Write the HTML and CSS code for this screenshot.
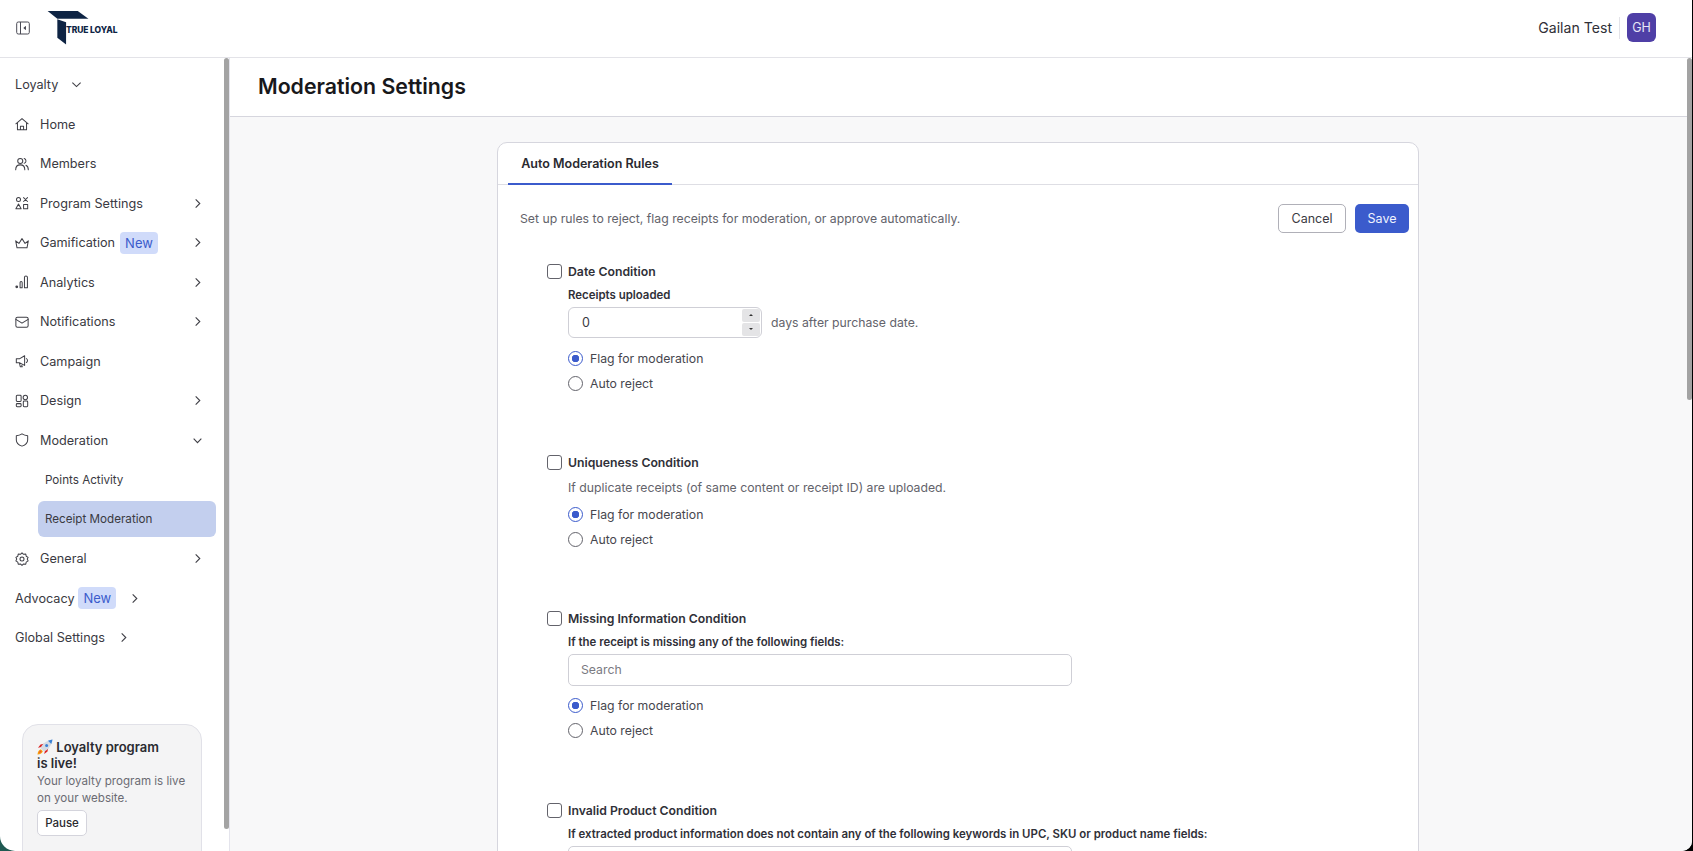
FILE: index.html
```html
<!DOCTYPE html>
<html lang="en">
<head>
<meta charset="utf-8">
<title>Moderation Settings</title>
<link rel="stylesheet" href="styles.css">
</head>
<body>
<div class="window">
  <header class="topbar">
    <div class="topbar-left">
      <svg class="toggle" viewBox="0 0 14 14" fill="none" stroke="#4b4b55" stroke-width="1"><rect x=".7" y="1" width="12.6" height="12" rx="1.6"/><path d="M4.5 1v12"/><path d="M9.5 5.5 7.8 7l1.7 1.500z" fill="#4b4b55"/></svg>
      <div class="logo">
        <svg class="logo-mark" viewBox="0 0 44 36"><path d="M0 0h31l11 8H10z" fill="#0e2444"/><path d="M10 8.500l9 3v23l-9-7z" fill="#0e2444"/></svg>
        <span class="logo-text">TRUE LOYAL</span>
      </div>
    </div>
    <div class="user">
      <span class="user-name">Gailan Test</span>
      <span class="user-sep"></span>
      <span class="avatar">GH</span>
    </div>
  </header>
  <div class="body">
    <aside class="sidebar">
      <nav class="nav">
        <div class="nav-row top-level"><span>Loyalty</span><svg class="chev chev-inline" viewBox="0 0 12 12"><path d="M1.500 4 6 8.300 10.500 4"/></svg></div>
        <div class="nav-row"><svg class="ico" viewBox="0 0 16 16"><path d="M1 7.800 8 1.800l7 6M2.800 6.500V14.500h10.400V6.500M6.200 14.500v-4h3.600v4"/></svg><span>Home</span></div>
        <div class="nav-row"><svg class="ico" viewBox="0 0 16 16"><circle cx="6" cy="4.500" r="2.900"/><path d="M.8 14.500c0-3.500 2-5.500 5.200-5.500s5.200 2 5.200 5.500M10.500 1.800a2.800 2.800 0 0 1 0 5.400M12.500 9.500c1.700.8 2.700 2.500 2.700 5"/></svg><span>Members</span></div>
        <div class="nav-row"><svg class="ico" viewBox="0 0 16 16"><circle cx="4" cy="4" r="2.300"/><path d="m9.800 1.800 4.500 4.500M14.300 1.800 9.800 6.300M4 9.200l3 5.300H1zM9.800 9.800h4.700v4.700H9.800z"/></svg><span>Program Settings</span><svg class="chev chev-end" viewBox="0 0 12 12"><path d="M4 1.500 8.500 6 4 10.500"/></svg></div>
        <div class="nav-row"><svg class="ico ico-wide" viewBox="0 0 16 16"><path d="M.8 5.500 4.500 8.500 8 3l3.500 5.500 3.700-3-1.500 8H2.300z"/></svg><span>Gamification</span><span class="badge">New</span><svg class="chev chev-end" viewBox="0 0 12 12"><path d="M4 1.500 8.500 6 4 10.500"/></svg></div>
        <div class="nav-row"><svg class="ico" viewBox="0 0 16 16"><circle cx="2" cy="13.500" r="1" fill="#3f3f46"/><path d="M5.800 14.500V8.500a1 1 0 0 1 2.400 0v6zM10.800 14.500V2.800a1.500 1.500 0 0 1 3.400 0v11.700z"/></svg><span>Analytics</span><svg class="chev chev-end" viewBox="0 0 12 12"><path d="M4 1.500 8.500 6 4 10.500"/></svg></div>
        <div class="nav-row"><svg class="ico" viewBox="0 0 16 16"><rect x="1" y="2.500" width="14" height="11.500" rx="1.800"/><path d="m1 5 7 4.300L15 5"/></svg><span>Notifications</span><svg class="chev chev-end" viewBox="0 0 12 12"><path d="M4 1.500 8.500 6 4 10.500"/></svg></div>
        <div class="nav-row"><svg class="ico" viewBox="0 0 16 16"><path d="M1.500 5.500h3.500L11 2v11L5 10H1.500zM5 10l1 4.500h2.300L7 10.800M13 5.300c1.700.8 1.700 3.600 0 4.400"/></svg><span>Campaign</span></div>
        <div class="nav-row"><svg class="ico" viewBox="0 0 16 16"><rect x="1.500" y="1.500" width="5.500" height="7" rx="1"/><circle cx="11.800" cy="4" r="2.500"/><rect x="1.500" y="11" width="5.500" height="3.500" rx="1"/><rect x="9.500" y="8" width="5" height="6.500" rx="1"/></svg><span>Design</span><svg class="chev chev-end" viewBox="0 0 12 12"><path d="M4 1.500 8.500 6 4 10.500"/></svg></div>
        <div class="nav-row"><svg class="ico" viewBox="0 0 16 16"><path d="M8 1c2 1.300 4.300 2 6.500 2.200V8c0 3.300-2.800 5.800-6.500 7-3.700-1.200-6.500-3.700-6.500-7V3.200C3.700 3 6 2.300 8 1z"/></svg><span>Moderation</span><svg class="chev chev-end" viewBox="0 0 12 12"><path d="M1.800 4 6 8.300 10.200 4"/></svg></div>
        <div class="nav-row sub"><span class="sub-item">Points Activity</span></div>
        <div class="nav-row sub"><span class="sub-item is-active">Receipt Moderation</span></div>
        <div class="nav-row"><svg class="ico" viewBox="0 0 16 16"><circle cx="8" cy="8" r="2.300"/><path d="m8 1 1.800 1.700 2.500-.3.500 2.400 2.200 1.300-1 2 1 2.100-2.200 1.300-.5 2.400-2.500-.3L8 15.300l-1.800-1.700-2.500.3-.5-2.400L1 10.200l1-2.100-1-2 2.200-1.300.5-2.400 2.500.3z"/></svg><span>General</span><svg class="chev chev-end" viewBox="0 0 12 12"><path d="M4 1.500 8.500 6 4 10.500"/></svg></div>
        <div class="nav-row top-level"><span>Advocacy</span><span class="badge">New</span><svg class="chev chev-inline wide" viewBox="0 0 12 12"><path d="M4 1.500 8.500 6 4 10.500"/></svg></div>
        <div class="nav-row top-level"><span>Global Settings</span><svg class="chev chev-inline" viewBox="0 0 12 12"><path d="M4 1.500 8.500 6 4 10.500"/></svg></div>
      </nav>
      <div class="promo">
        <div class="promo-title"><svg class="rocket" viewBox="0 0 16 16"><path d="M.5 15.500c.2-3 1.500-4.700 3.300-5.300l2 2c-.6 1.800-2.300 3.100-5.300 3.300z" fill="#f59e0b"/><path d="M2 14c.2-1.200.8-2 1.800-2.400l.6.600C4 13.200 3.200 13.800 2 14z" fill="#ef4444"/><path d="M4.500 8 1 8.800l2.500-3.300 3.500-.7zM8 11.500l-.8 3.500 3.300-2.500.7-3.500z" fill="#dc2626"/><path d="M3.500 9C5.500 4.500 9.500 1.500 15.500.5 14.500 6.500 11.500 10.500 7 12.500z" fill="#d5dae3"/><path d="M11 1.700C12.800 1.100 14.200.7 15.500.5c-.2 1.300-.6 2.800-1.200 4.500z" fill="#3b82d6"/><circle cx="9.600" cy="6.400" r="1.500" fill="#3b82d6"/></svg> Loyalty program<br>is live!</div>
        <p class="promo-text">Your loyalty program is live on your website.</p>
        <button class="btn-pause" type="button">Pause</button>
      </div>
      <span class="scroll scroll-side"></span>
    </aside>
    <main class="main">
      <div class="page-head"><h1>Moderation Settings</h1></div>
      <div class="page-body">
        <section class="card">
          <div class="tabs"><div class="tab">Auto Moderation Rules</div></div>
          <div class="card-body">
            <div class="intro">
              <p class="muted intro-text">Set up rules to reject, flag receipts for moderation, or approve automatically.</p>
              <div class="actions">
                <button class="btn btn-ghost" type="button">Cancel</button>
                <button class="btn btn-primary" type="button">Save</button>
              </div>
            </div>

            <div class="rule rule-date">
              <label class="rule-head"><input type="checkbox"><span>Date Condition</span></label>
              <div class="rule-content">
                <div class="field-label">Receipts uploaded</div>
                <div class="days">
                  <div class="number"><span>0</span>
                    <div class="spin"><span class="spin-b"><i class="up"></i></span><span class="spin-b"><i class="down"></i></span></div>
                  </div>
                  <span class="muted">days after purchase date.</span>
                </div>
                <div class="radios">
                  <label class="radio"><input type="radio" name="a" checked><span>Flag for moderation</span></label>
                  <label class="radio"><input type="radio" name="a"><span>Auto reject</span></label>
                </div>
              </div>
            </div>

            <div class="rule rule-unique">
              <label class="rule-head"><input type="checkbox"><span>Uniqueness Condition</span></label>
              <div class="rule-content">
                <p class="muted desc">If duplicate receipts (of same content or receipt ID) are uploaded.</p>
                <div class="radios">
                  <label class="radio"><input type="radio" name="b" checked><span>Flag for moderation</span></label>
                  <label class="radio"><input type="radio" name="b"><span>Auto reject</span></label>
                </div>
              </div>
            </div>

            <div class="rule rule-missing">
              <label class="rule-head"><input type="checkbox"><span>Missing Information Condition</span></label>
              <div class="rule-content">
                <div class="field-label">If the receipt is missing any of the following fields:</div>
                <input class="search" type="text" placeholder="Search">
                <div class="radios">
                  <label class="radio"><input type="radio" name="c" checked><span>Flag for moderation</span></label>
                  <label class="radio"><input type="radio" name="c"><span>Auto reject</span></label>
                </div>
              </div>
            </div>

            <div class="rule">
              <label class="rule-head"><input type="checkbox"><span>Invalid Product Condition</span></label>
              <div class="rule-content">
                <div class="field-label">If extracted product information does not contain any of the following keywords in UPC, SKU or product name fields:</div>
                <input class="search" type="text">
              </div>
            </div>
          </div>
        </section>
      </div>
      <span class="scroll scroll-main"></span>
    </main>
  </div>
</div>
</body>
</html>
```
FILE: styles.css
```css
* { box-sizing: border-box; }
html, body { height: 100%; margin: 0; overflow: hidden; }
body {
  background: linear-gradient(90deg, #1f5a52 0, #0c1f1d 30%, #000 100%);
  font-family: Inter, "Liberation Sans", sans-serif;
  color: #3a3a42;
}
.window {
  width: 1692px;
  height: 851px;
  background: #fff;
  border-radius: 0 0 10px 15px;
  overflow: hidden;
  display: flex;
  flex-direction: column;
}
.topbar {
  height: 58px;
  flex: none;
  display: flex;
  justify-content: space-between;
  align-items: center;
  border-bottom: 1px solid #e3e3e8;
  padding: 0 36px 2px 16px;
}
.topbar-left { display: flex; align-items: center; gap: 17px; }
.toggle { width: 14px; height: 14px; display: block; }
.logo { position: relative; width: 71px; height: 35px; margin-top: 2px; }
.logo-mark { position: absolute; left: 0; top: 0; width: 44px; height: 35px; }
.logo-text {
  position: absolute;
  left: 19px;
  top: 14px;
  font-size: 8.500px;
  line-height: 10px;
  font-weight: 800;
  color: #0e2444;
  white-space: nowrap;
  letter-spacing: -.1px;
}
.user { display: flex; align-items: center; }
.user-name { font-size: 14.100px; color: #303038; }
.user-sep { width: 1px; height: 22px; background: #e3e3e8; margin: 0 7px; }
.avatar {
  width: 29px;
  height: 29px;
  border-radius: 6px;
  background: #4f3fa6;
  color: #e8e6f6;
  font-size: 12.500px;
  display: flex;
  align-items: center;
  justify-content: center;
}
.body { flex: 1; display: flex; min-height: 0; }
.sidebar {
  position: relative;
  width: 230px;
  flex: none;
  border-right: 1px solid #e4e4ec;
  overflow: hidden;
}
.nav { padding: 7px 0 0 15px; }
.nav-row {
  height: 39.500px;
  display: flex;
  align-items: center;
  font-size: 12.650px;
  color: #3a3a42;
  white-space: nowrap;
  width: 188px;
}
.ico {
  width: 14px;
  height: 14px;
  margin-right: 11px;
  flex: none;
  fill: none;
  stroke: #3f3f46;
  stroke-width: 1.150;
  stroke-linejoin: round;
  stroke-linecap: round;
}
.chev { width: 11px; height: 11px; flex: none; fill: none; stroke: #3f3f46; stroke-width: 1.200; }
.chev-end { margin-left: auto; }
.chev-inline { margin-left: 13px; }
.chev-inline.wide { margin-left: 4px; }
.badge {
  height: 22px;
  padding: 0 5px;
  margin-left: 5px;
  border-radius: 4px;
  background: #d0dbfa;
  color: #3b5bcc;
  font-size: 13px;
  line-height: 22px;
}
.top-level .badge { margin-left: 4px; margin-right: 9px; }
.sub { padding-left: 23px; width: 201px; }
.sub-item { display: block; width: 178px; padding-left: 7px; height: 36px; line-height: 36px; border-radius: 6px; font-size: 11.650px; }
.is-active { background: #c3cfee; }
.promo {
  position: absolute;
  left: 22px;
  top: 666px;
  width: 180px;
  height: 150px;
  border: 1px solid #e1e1e8;
  border-radius: 16px;
  background: #f4f4f5;
  padding: 14px 14px 0;
}
.promo-title { font-size: 13px; line-height: 16px; font-weight: 600; color: #2a2a30; }
.rocket { width: 16px; height: 16px; vertical-align: -3px; }
.promo-text { margin: 2px 0 4px; font-size: 11.600px; line-height: 16.500px; color: #6b6b73; }
.btn-pause {
  width: 50px;
  height: 26px;
  border: 1px solid #d4d4dc;
  border-radius: 5px;
  background: #fff;
  font: 500 11.500px Inter, sans-serif;
  color: #2a2a30;
  padding: 0;
}
.scroll { position: absolute; background: #a3a3a3; border-radius: 3px; width: 5px; }
.scroll-side { left: 224px; top: 0; height: 771px; }
.scroll-main { right: 0; top: 0; height: 342px; }
.main { position: relative; flex: 1; display: flex; flex-direction: column; min-width: 0; background: #f8f8f9; }
.page-head {
  height: 59px;
  flex: none;
  background: #fff;
  border-bottom: 1px solid #d6d6de;
  padding-left: 28px;
  display: flex;
  align-items: center;
}
h1 { margin: 0 0 3px; font-size: 21.300px; font-weight: 600; color: #18181b; }
.page-body { flex: 1; padding: 25px 0 0 267px; overflow: hidden; }
.card {
  width: 922px;
  height: 900px;
  background: #fff;
  border: 1px solid #d6d6de;
  border-radius: 10px;
}
.tabs { height: 42px; border-bottom: 1px solid #dedee4; padding-left: 10px; }
.tab {
  width: 164px;
  height: 42px;
  border-bottom: 2px solid #3b5bcc;
  text-align: center;
  font-size: 12.500px;
  font-weight: 600;
  line-height: 42px;
  color: #2a2a30;
  white-space: nowrap;
}
.card-body { padding: 19px 9px 0 22px; }
.intro { display: flex; justify-content: space-between; height: 29px; align-items: center; }
.muted { margin: 0; font-size: 12.260px; color: #63636b; }
.intro-text { margin-bottom: 1px; }
.actions { display: flex; gap: 9px; }
.btn { height: 29px; border-radius: 5px; font: 12.500px Inter, sans-serif; padding: 0 0 1px; }
.btn-ghost { width: 68px; background: #fff; border: 1px solid #b0b0b8; color: #3a3a42; }
.btn-primary { width: 54px; background: #3b5bcc; border: 0; color: #f0f3ff; }
.rule { margin-left: 27px; }
.rule-date { margin-top: 30.500px; height: 191px; }
.rule-unique { height: 156px; }
.rule-missing { height: 192px; }
.rule-head { display: flex; align-items: center; gap: 6px; font-size: 12.250px; font-weight: 600; color: #303038; height: 16px; }
input[type="checkbox"] {
  appearance: none;
  width: 15px;
  height: 15px;
  margin: 0;
  border: 1px solid #63636b;
  border-radius: 3px;
  background: #fff;
}
.rule-content { padding-left: 21px; }
.field-label { font-size: 11.430px; font-weight: 600; color: #303038; line-height: 14px; margin-top: 8px; }
.days { display: flex; align-items: center; gap: 9px; margin-top: 5px; }
.number {
  position: relative;
  width: 194px;
  height: 31px;
  border: 1px solid #cfcfd6;
  border-radius: 6px;
  padding-left: 13px;
  display: flex;
  align-items: center;
  font-size: 12.500px;
  color: #3a3a42;
}
.spin { position: absolute; right: 1px; top: 1px; display: flex; flex-direction: column; gap: 1px; }
.spin-b { width: 18px; height: 13px; background: #e4e4e6; border-radius: 2px; display: flex; align-items: center; justify-content: center; }
.spin-b i { width: 0; height: 0; border-left: 2px solid transparent; border-right: 2px solid transparent; }
.spin-b .up { border-bottom: 2px solid #333; }
.spin-b .down { border-top: 2px solid #333; }
.radios { display: flex; flex-direction: column; gap: 9px; margin-top: 12px; }
.rule-date .radios { margin-top: 13px; }
.rule-unique .radios { margin-top: 10.500px; }
.radio { display: flex; align-items: center; gap: 7px; font-size: 12.250px; color: #46464e; height: 16px; }
input[type="radio"] {
  appearance: none;
  width: 15px;
  height: 15px;
  margin: 0;
  border: 1px solid #63636b;
  border-radius: 50%;
  background: #fff;
  flex: none;
}
input[type="radio"]:checked { border-color: #3b5bcc; background: radial-gradient(circle, #3b5bcc 0 3.500px, #fff 4px); }
.desc { margin-top: 9px; line-height: 16px; }
.search {
  display: block;
  width: 504px;
  height: 32px;
  margin-top: 5px;
  border: 1px solid #cfcfd6;
  border-radius: 5px;
  padding: 0 12px;
  font: 12.250px Inter, sans-serif;
  background: #fff;
}
.search::placeholder { color: #7a7a82; }
```
